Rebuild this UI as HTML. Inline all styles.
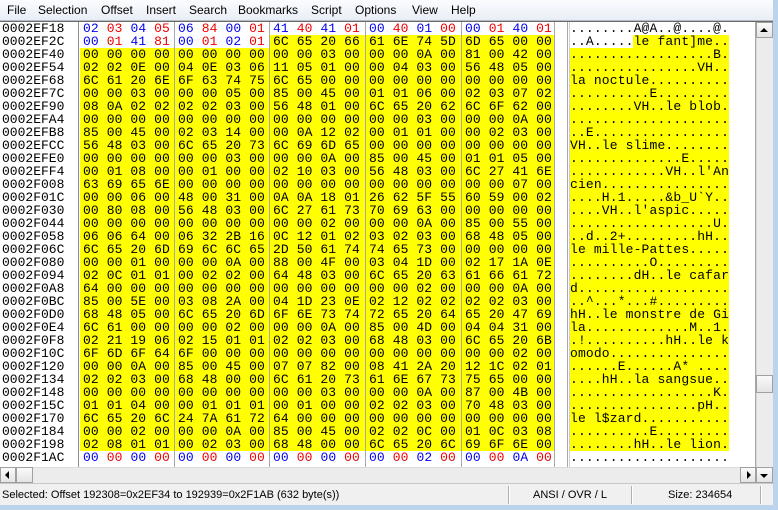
<!DOCTYPE html>
<html><head><meta charset="utf-8"><style>
*{margin:0;padding:0;box-sizing:border-box}
html,body{width:778px;height:510px;overflow:hidden;background:#fff}
body{position:relative;font-family:"Liberation Sans",sans-serif}
#menu{position:absolute;left:0;top:0;width:778px;height:21px;background:linear-gradient(#fbfcfe,#e9eef6);border-bottom:1px solid #b8bcc4}
#menu span{position:absolute;top:3px;font-size:12px;color:#000}
pre{position:absolute;font-family:"Liberation Mono",monospace;font-size:13px;line-height:13px;color:#000;white-space:pre}
.hex{letter-spacing:0.1px;top:22px}
.b{color:#0000f0}.r{color:#f00000}
.vl{position:absolute;width:1px;background:#a8a8a8;top:22px;height:445px}
.y{position:absolute;background:#ffff00}
#vs{position:absolute;left:756px;top:22px;width:17px;height:445px;background:#ececec;border-left:1px solid #d8d8d8}
.btn{position:absolute;background:linear-gradient(#fafafa,#e4e4e4);border:1px solid #a0a0a0}
#status{position:absolute;left:0;top:483px;width:774px;height:22px;background:#f0f0f0;border-top:1px solid #c8c8c8;font-size:11px}
#status span{position:absolute;top:5px}
.sep{position:absolute;top:2px;width:2px;height:18px;border-left:1px solid #b0b0b0;border-right:1px solid #fff}
</style></head><body>
<div id="menu">
<span style="left:7px">File</span><span style="left:38px">Selection</span><span style="left:101px">Offset</span><span style="left:146px">Insert</span><span style="left:189px">Search</span><span style="left:238px">Bookmarks</span><span style="left:311px">Script</span><span style="left:355px">Options</span><span style="left:412px">View</span><span style="left:451px">Help</span>
</div>
<div style="position:absolute;left:0;top:21px;width:778px;height:1px;background:#6a6a6a"></div>

<div class="y" style="left:270px;top:35px;width:284px;height:13px"></div>
<div class="y" style="left:80px;top:48px;width:474px;height:403px"></div>
<div class="y" style="left:633px;top:35px;width:96px;height:13px"></div>
<div class="y" style="left:570px;top:48px;width:159px;height:403px"></div>

<pre style="left:2px;top:22px">0002EF18
0002EF2C
0002EF40
0002EF54
0002EF68
0002EF7C
0002EF90
0002EFA4
0002EFB8
0002EFCC
0002EFE0
0002EFF4
0002F008
0002F01C
0002F030
0002F044
0002F058
0002F06C
0002F080
0002F094
0002F0A8
0002F0BC
0002F0D0
0002F0E4
0002F0F8
0002F10C
0002F120
0002F134
0002F148
0002F15C
0002F170
0002F184
0002F198
0002F1AC</pre>

<div class="vl" style="left:78px;background:#909090"></div>
<div class="vl" style="left:174px"></div>
<div class="vl" style="left:269px"></div>
<div class="vl" style="left:365px"></div>
<div class="vl" style="left:461px"></div>
<div class="vl" style="left:554px"></div>
<div class="vl" style="left:567px"></div>
<div class="vl" style="left:569px;background:#d0d0d0"></div>
<div class="vl" style="left:755px"></div>

<pre class="hex" style="left:83px"><span class="b">02</span> <span class="r">03</span> <span class="b">04</span> <span class="r">05</span>
<span class="b">00</span> <span class="r">01</span> <span class="b">41</span> <span class="r">81</span>
00 00 00 00
02 02 0E 00
6C 61 20 6E
00 00 03 00
08 0A 02 02
00 00 00 00
85 00 45 00
56 48 03 00
00 00 00 00
00 01 08 00
63 69 65 6E
00 00 06 00
00 80 08 00
00 00 00 00
06 06 64 00
6C 65 20 6D
00 00 01 00
02 0C 01 01
64 00 00 00
85 00 5E 00
68 48 05 00
6C 61 00 00
02 21 19 06
6F 6D 6F 64
00 00 0A 00
02 02 03 00
00 00 00 00
01 01 04 00
6C 65 20 6C
00 00 02 00
02 08 01 01
<span class="b">00</span> <span class="r">00</span> <span class="b">00</span> <span class="r">00</span></pre>

<pre class="hex" style="left:178px"><span class="b">06</span> <span class="r">84</span> <span class="b">00</span> <span class="r">01</span>
<span class="b">00</span> <span class="r">01</span> <span class="b">02</span> <span class="r">01</span>
00 00 00 00
04 0E 03 06
6F 63 74 75
00 00 05 00
02 02 03 00
00 00 00 00
02 03 14 00
6C 65 20 73
00 00 03 00
00 01 00 00
00 00 00 00
48 00 31 00
56 48 03 00
00 00 00 00
06 32 2B 16
69 6C 6C 65
00 00 0A 00
00 02 02 00
00 00 00 00
03 08 2A 00
6C 65 20 6D
00 00 02 00
02 15 01 01
6F 00 00 00
85 00 45 00
68 48 00 00
00 00 00 00
00 01 01 01
24 7A 61 72
00 00 0A 00
00 02 03 00
<span class="b">00</span> <span class="r">00</span> <span class="b">00</span> <span class="r">00</span></pre>

<pre class="hex" style="left:273px"><span class="b">41</span> <span class="r">40</span> <span class="b">41</span> <span class="r">01</span>
6C 65 20 66
00 00 03 00
11 05 01 00
6C 65 00 00
85 00 45 00
56 48 01 00
00 00 00 00
00 0A 12 02
6C 69 6D 65
00 00 0A 00
02 10 03 00
00 00 00 00
0A 0A 18 01
6C 27 61 73
00 00 02 00
0C 12 01 02
2D 50 61 74
88 00 4F 00
64 48 03 00
00 00 00 00
04 1D 23 0E
6F 6E 73 74
00 00 0A 00
02 02 03 00
00 00 00 00
07 07 82 00
6C 61 20 73
00 00 03 00
00 01 00 00
64 00 00 00
85 00 45 00
68 48 00 00
<span class="b">00</span> <span class="r">00</span> <span class="b">00</span> <span class="r">00</span></pre>

<pre class="hex" style="left:369px"><span class="b">00</span> <span class="r">40</span> <span class="b">01</span> <span class="r">00</span>
61 6E 74 5D
00 00 0A 00
00 04 03 00
00 00 00 00
01 01 06 00
6C 65 20 62
00 00 03 00
00 01 01 00
00 00 00 00
85 00 45 00
56 48 03 00
00 00 00 00
26 62 5F 55
70 69 63 00
00 00 0A 00
03 02 03 00
74 65 73 00
03 04 1D 00
6C 65 20 63
00 00 02 00
02 12 02 02
72 65 20 64
85 00 4D 00
68 48 03 00
00 00 00 00
08 41 2A 20
61 6E 67 73
00 00 0A 00
02 02 03 00
00 00 00 00
02 02 0C 00
6C 65 20 6C
<span class="b">00</span> <span class="r">00</span> <span class="b">02</span> <span class="r">00</span></pre>

<pre class="hex" style="left:465px"><span class="b">00</span> <span class="r">01</span> <span class="b">40</span> <span class="r">01</span>
6D 65 00 00
81 00 42 00
56 48 05 00
00 00 00 00
02 03 07 02
6C 6F 62 00
00 00 0A 00
00 02 03 00
00 00 00 00
01 01 05 00
6C 27 41 6E
00 00 07 00
60 59 00 02
00 00 00 00
85 00 55 00
68 48 05 00
00 00 00 00
02 17 1A 0E
61 66 61 72
00 00 0A 00
02 02 03 00
65 20 47 69
04 04 31 00
6C 65 20 6B
00 00 02 00
12 1C 02 01
75 65 00 00
87 00 4B 00
70 48 03 00
00 00 00 00
01 0C 03 08
69 6F 6E 00
<span class="b">00</span> <span class="r">00</span> <span class="b">0A</span> <span class="r">00</span></pre>

<pre style="left:570px;top:22px;letter-spacing:0.15px">........A@A..@....@.
..A.....le fant]me..
..................B.
................VH..
la noctule..........
..........E.........
........VH..le blob.
....................
..E.................
VH..le slime........
..............E.....
............VH..l'An
cien................
....H.1.....&amp;b_U`Y..
....VH..l'aspic.....
..................U.
..d..2+.........hH..
le mille-Pattes.....
..........O.........
........dH..le cafar
d...................
..^...*...#.........
hH..le monstre de Gi
la.............M..1.
.!..........hH..le k
omodo...............
......E......A* ....
....hH..la sangsue..
..................K.
................pH..
le l$zard...........
..........E.........
........hH..le lion.
....................</pre>

<div id="vs"></div>
<div class="btn" style="left:756px;top:22px;width:17px;height:16px"></div>
<div style="position:absolute;left:760px;top:28px;width:0;height:0;border-left:4px solid transparent;border-right:4px solid transparent;border-bottom:4px solid #000"></div>
<div class="btn" style="left:756px;top:375px;width:17px;height:18px"></div>

<div style="position:absolute;left:0;top:467px;width:756px;height:16px;background:#ececec;border-top:1px solid #dcdcdc"></div>
<div class="btn" style="left:0;top:467px;width:16px;height:16px"></div>
<div style="position:absolute;left:5px;top:471px;width:0;height:0;border-top:4px solid transparent;border-bottom:4px solid transparent;border-right:4px solid #000"></div>
<div class="btn" style="left:16px;top:467px;width:17px;height:16px"></div>
<div class="btn" style="left:740px;top:467px;width:16px;height:16px"></div>
<div style="position:absolute;left:747px;top:471px;width:0;height:0;border-top:4px solid transparent;border-bottom:4px solid transparent;border-left:4px solid #000"></div>
<div class="btn" style="left:756px;top:467px;width:17px;height:16px"></div>
<div style="position:absolute;left:760px;top:474px;width:0;height:0;border-left:4px solid transparent;border-right:4px solid transparent;border-top:4px solid #000"></div>

<div id="status">
<span style="left:2px">Selected: Offset 192308=0x2EF34 to 192939=0x2F1AB (632 byte(s))</span>
<div class="sep" style="left:508px"></div>
<span style="left:533px">ANSI / OVR / L</span>
<div class="sep" style="left:631px"></div>
<span style="left:668px">Size: 234654</span>
<div class="sep" style="left:760px"></div>
</div>
<div style="position:absolute;left:0;top:505px;width:778px;height:5px;background:#bcd3ec"></div>
<div style="position:absolute;left:773px;top:0;width:5px;height:510px;background:#bcd3ec"></div>
</body></html>
